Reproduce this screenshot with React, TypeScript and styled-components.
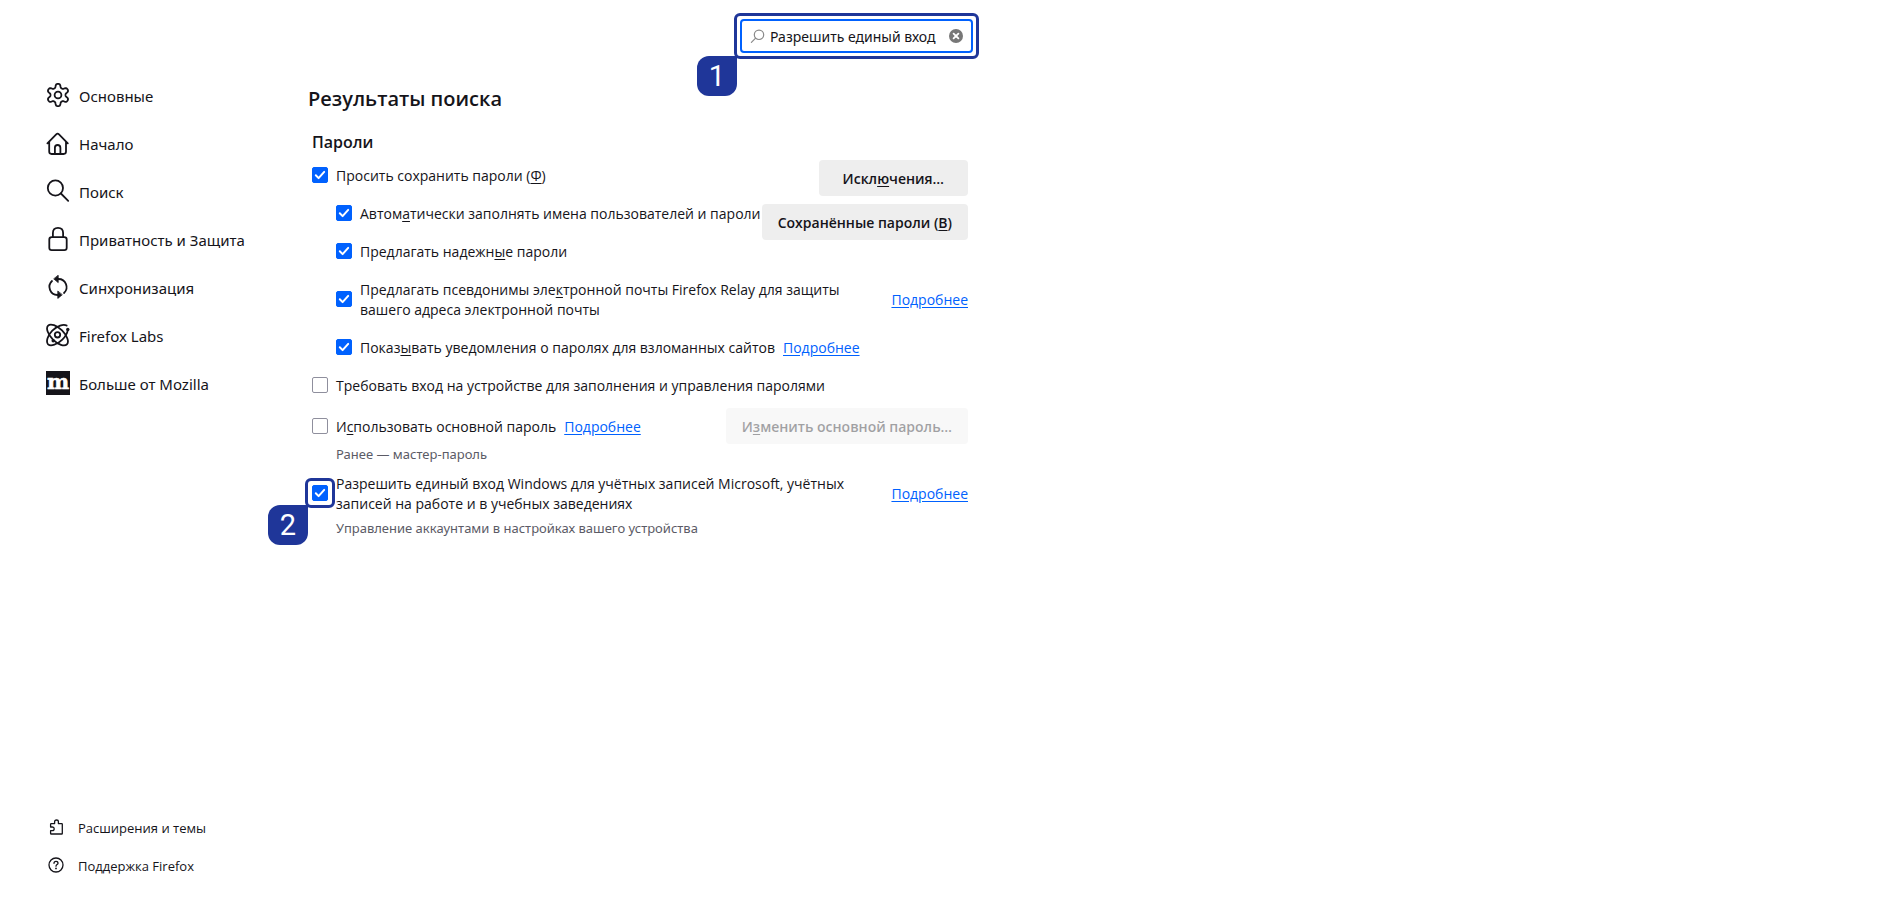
import React, { useId, useState } from 'react';
import styled, { createGlobalStyle, css } from 'styled-components';

const ink = '#15141a';
const accent = '#0061fe';
const marker = '#1f3699';

const GlobalStyle = createGlobalStyle`
  *, *::before, *::after { box-sizing: border-box; }
  body {
    margin: 0;
    background: #fff;
    color: ${ink};
    font: 14px/20px "Open Sans", "Noto Sans", sans-serif;
  }
  p, h1, h2, ul { margin: 0; padding: 0; }
  ul { list-style: none; }
`;

/* ---------- layout ---------- */

const Page = styled.div`
  display: flex;
  align-items: stretch;
  min-height: 100vh;
`;

const Sidebar = styled.nav`
  display: flex;
  flex-direction: column;
  justify-content: space-between;
  flex: 0 0 308px;
  padding: 71px 16px 36px 46px;
`;

const Main = styled.main`
  flex: 0 1 665px;
  padding-top: 19px;
`;

const Content = styled.div`
  padding: 32px 5px 32px 0;
`;

/* ---------- sidebar ---------- */

const CategoryLink = styled.a`
  display: flex;
  align-items: center;
  gap: 9px;
  height: 48px;
  color: inherit;
  font-family: "Noto Sans", sans-serif;
  font-size: 15px;
  text-decoration: none;
  white-space: nowrap;
`;

const FooterLink = styled(CategoryLink)`
  gap: 14px;
  height: 38px;
  padding-left: 2px;
  font-family: inherit;
  font-size: 13px;
`;

const LinkText = styled.span`
  padding-top: 2px;
`;

const Icon = styled.svg<{ $size?: number }>`
  display: block;
  flex: none;
  width: ${p => p.$size ?? 24}px;
  height: ${p => p.$size ?? 24}px;
  fill: none;
  stroke: ${ink};
  stroke-width: 1.8;
  stroke-linecap: round;
  stroke-linejoin: round;
`;

const LogoLetter = styled.text`
  fill: #fff;
  stroke: #fff;
  stroke-width: 0.5;
  font: bold 21px "DejaVu Serif", serif;
  text-anchor: middle;
`;

/* ---------- numbered markers ---------- */

const Highlight = styled.div<{ $gap: number }>`
  position: absolute;
  inset: -${p => p.$gap + 3}px;
  border: 3px solid ${marker};
  border-radius: 6px;
  pointer-events: none;
`;

const Step = styled.span`
  position: absolute;
  top: 100%;
  right: 100%;
  display: grid;
  place-items: center;
  width: 40px;
  height: 40px;
  border-radius: 12px 0 12px 12px;
  background: ${marker};
  color: #fff;
  font: 29px/40px Roboto, "Liberation Sans", sans-serif;
`;

/* ---------- search ---------- */

const Header = styled.header`
  display: flex;
  justify-content: flex-end;
`;

const SearchBox = styled.div`
  position: relative;
  display: flex;
  align-items: center;
  gap: 5px;
  width: 233px;
  height: 34px;
  padding: 0 8px;
  border: 2px solid ${accent};
  border-radius: 4px;
`;

const SearchInput = styled.input`
  flex: 1;
  min-width: 0;
  height: 28px;
  padding: 0;
  border: 0;
  outline: 0;
  background: transparent;
  color: inherit;
  font: 14px/20px "Noto Sans", sans-serif;
`;

const ClearButton = styled.button`
  padding: 0;
  border: 0;
  background: none;
  cursor: pointer;
`;

/* ---------- settings ---------- */

const Title = styled.h1`
  font-size: 20px;
  line-height: 28px;
  font-weight: 600;
`;

const Group = styled.section`
  padding: 18px 0 0 4px;
`;

const GroupTitle = styled.h2`
  font-size: 16px;
  line-height: 22px;
  font-weight: 600;
`;

const SplitRow = styled.div`
  display: flex;
  justify-content: space-between;
  align-items: flex-start;
  padding-top: 7px;
`;

const ButtonStack = styled.div`
  display: flex;
  flex-direction: column;
  align-items: flex-end;
  gap: 8px;
`;

const Stack = styled.div`
  display: flex;
  flex-direction: column;
  gap: 18px;
`;

const TopStack = styled(Stack)`
  padding-top: 6px;
`;

const LowerStack = styled(Stack)`
  padding-top: 18px;
`;

const Row = styled.div<{ $nested?: boolean; $spread?: boolean }>`
  display: flex;
  align-items: center;
  gap: 8px;
  ${p => p.$nested && css`padding-left: 24px;`}
  ${p => p.$spread && css`justify-content: space-between; gap: 24px;`}
`;

const PrimaryRow = styled(Row)`
  padding-top: 12px;
`;

const PrimaryLead = styled(Row)`
  padding-top: 2px;
`;

const SignOnRow = styled(Row)`
  padding-top: 11px;
`;

const CheckLabel = styled.label<{ $wrap?: boolean }>`
  display: flex;
  align-items: center;
  gap: 8px;
  white-space: ${p => (p.$wrap ? 'normal' : 'nowrap')};
`;

const CheckCell = styled.span`
  position: relative;
  display: grid;
  flex: none;
  width: 16px;
  height: 16px;
  margin-bottom: 2px;
  > * { grid-area: 1 / 1; }
`;

const CheckInput = styled.input`
  appearance: none;
  width: 16px;
  height: 16px;
  margin: 0;
  border: 1px solid #8f8f9d;
  border-radius: 2px;
  background: #fff;
  &:checked { border-color: ${accent}; background: ${accent}; }
`;

const Tick = styled(Icon)`
  stroke: #fff;
  stroke-width: 2;
  pointer-events: none;
`;

const Hint = styled.p`
  padding: 1px 0 0 24px;
  color: #5b5b66;
  font: 13px/18px "Noto Sans", sans-serif;
`;

const SignOnHint = styled(Hint)`
  padding-top: 5px;
`;

const LearnMore = styled.a`
  flex: none;
  color: ${accent};
  text-underline-offset: 2px;
`;

const PushButton = styled.button<{ $wide?: boolean }>`
  flex: none;
  height: 36px;
  padding: 1px ${p => (p.$wide ? 24 : 16)}px 0;
  border: 0;
  border-radius: 4px;
  background: #eeeeee;
  color: ${ink};
  font: inherit;
  font-weight: 600;
  white-space: nowrap;
  &:disabled { opacity: 0.4; }
`;

const Key = styled.u`
  text-underline-offset: 2px;
`;

/* ---------- icons ---------- */

const gearPath = (() => {
  const points: string[] = [];
  for (let i = 0; i < 120; i++) {
    const a = (i / 120) * Math.PI * 2;
    const r = 9.3 + 1.9 * Math.tanh(1.7 * Math.cos(6 * a));
    points.push(`${(12 + r * Math.sin(a)).toFixed(2)} ${(12 - r * Math.cos(a)).toFixed(2)}`);
  }
  return `M${points.join('L')}Z`;
})();

const GearIcon = () => (
  <Icon viewBox="0 0 24 24" aria-hidden><path d={gearPath} /><circle cx="12" cy="12" r="3.4" /></Icon>
);
const HomeIcon = () => (
  <Icon viewBox="0 0 24 24" aria-hidden>
    <path d="M1.4 12.4 10.2 3.3Q11.6 1.9 13 3.3L21.8 12.4M3.2 10.8V20.6Q3.2 23 5.6 23H17.6Q20 23 20 20.6V10.8M8.9 23V16.8Q8.9 14 11.6 14T14.4 16.8V23" />
  </Icon>
);
const FindIcon = () => (
  <Icon viewBox="0 0 24 24" aria-hidden><circle cx="9.4" cy="9" r="7.6" /><path d="M14.9 14.5 22.2 21.8" /></Icon>
);
const LockIcon = () => (
  <Icon viewBox="0 0 24 24" aria-hidden>
    <path d="M6.9 10.2V6Q6.9 .9 12 .9T17.1 6V10.2" /><rect x="3.3" y="10.2" width="17.4" height="12.9" rx="2.4" />
  </Icon>
);
const SyncIcon = () => (
  <Icon viewBox="0 0 24 24" aria-hidden>
    <path d="M12.5 4A8.1 8.1 0 0 1 18 18M11.5 20A8.1 8.1 0 0 1 6 6" />
    <path d="M12.2 .6V7.6L8 4.1ZM11.8 16.4V23.4L16 19.9Z" fill={ink} strokeWidth=".8" />
  </Icon>
);
const LabsIcon = () => (
  <Icon viewBox="0 0 24 24" aria-hidden>
    <ellipse cx="11.5" cy="12" rx="13.3" ry="6.4" transform="rotate(45 11.5 12)" />
    <path d="M20.6 2.6C17.6 .4 11 3 6.300 7.600 1.700 12.300 -.4 18.600 2.100 21.300 4.700 23.700 11.500 21.400 16.300 16.600 19.500 13.400 21.400 10.200 21.800 7" />
    <circle cx="11.5" cy="11.8" r="2.7" />
    <circle cx="21.8" cy="6.5" r="1.7" fill={ink} stroke="none" />
    <circle cx="7.2" cy="17.8" r="1.7" fill={ink} stroke="none" />
  </Icon>
);
const MozillaIcon = () => (
  <Icon viewBox="0 0 24 24" aria-hidden>
    <rect width="24" height="24" fill={ink} stroke="none" /><LogoLetter x="12" y="18">m</LogoLetter>
  </Icon>
);
const AddonIcon = () => (
  <Icon viewBox="0 0 16 16" $size={16} aria-hidden>
    <path strokeWidth="1.3" d="M2.6 8V5.2Q2.6 4.6 3.2 4.6H6.6V2.8Q6.6 1 8.5 1T10.4 2.8V4.6H13.7Q14.3 4.6 14.3 5.2V14.4Q14.3 15 13.7 15H3.2Q2.6 15 2.6 14.4V11.7H4.4Q6.2 11.7 6.2 9.85T4.4 8Z" />
  </Icon>
);
const HelpIcon = () => (
  <Icon viewBox="0 0 16 16" $size={16} aria-hidden>
    <circle cx="8" cy="8" r="7" strokeWidth="1.3" />
    <path strokeWidth="1.3" d="M6 6.3Q6 4.4 8 4.4T10 6.2C10 7.6 8 7.6 8 9.2" />
    <circle cx="8" cy="11.4" r=".9" fill={ink} stroke="none" />
  </Icon>
);

/* ---------- pieces ---------- */

interface CheckProps {
  initial?: boolean;
  wrap?: boolean;
  step?: number;
  children: React.ReactNode;
}

function Check({ initial = false, wrap, step, children }: CheckProps) {
  const id = useId();
  const [on, setOn] = useState(initial);
  return (
    <CheckLabel htmlFor={id} $wrap={wrap}>
      <CheckCell>
        <CheckInput id={id} type="checkbox" checked={on} onChange={e => setOn(e.target.checked)} />
        {on && <Tick viewBox="0 0 16 16" $size={16} aria-hidden><path d="M3.8 8.3 6.6 11.1 12.2 4.9" /></Tick>}
        {step && <Highlight $gap={4}><Step>{step}</Step></Highlight>}
      </CheckCell>
      <span>{children}</span>
    </CheckLabel>
  );
}

const More = () => <LearnMore href="#more">Подробнее</LearnMore>;

const categories = [
  { name: 'Основные', Glyph: GearIcon },
  { name: 'Начало', Glyph: HomeIcon },
  { name: 'Поиск', Glyph: FindIcon },
  { name: 'Приватность и Защита', Glyph: LockIcon },
  { name: 'Синхронизация', Glyph: SyncIcon },
  { name: 'Firefox Labs', Glyph: LabsIcon },
  { name: 'Больше от Mozilla', Glyph: MozillaIcon },
];

export default function App() {
  const [query, setQuery] = useState('Разрешить единый вход');
  return (
    <>
      <GlobalStyle />
      <Page>
        <Sidebar>
          <ul>
            {categories.map(({ name, Glyph }) => (
              <li key={name}><CategoryLink href="#category"><Glyph /><LinkText>{name}</LinkText></CategoryLink></li>
            ))}
          </ul>
          <ul>
            <li><FooterLink href="#addons"><AddonIcon /><LinkText>Расширения и темы</LinkText></FooterLink></li>
            <li><FooterLink href="#support"><HelpIcon /><LinkText>Поддержка Firefox</LinkText></FooterLink></li>
          </ul>
        </Sidebar>
        <Main>
          <Header>
            <SearchBox>
              <Icon viewBox="0 0 16 16" $size={15} aria-hidden>
                <g stroke="#8a8a8a" strokeWidth="1.3"><circle cx="9.6" cy="6.2" r="5" /><path d="M6 9.8 1.5 14.3" /></g>
              </Icon>
              <SearchInput aria-label="Поиск" value={query} onChange={e => setQuery(e.target.value)} />
              <ClearButton type="button" aria-label="Очистить" onClick={() => setQuery('')}>
                <Icon viewBox="0 0 14 14" $size={14} aria-hidden>
                  <circle cx="7" cy="7" r="7" fill="#777" stroke="none" />
                  <path d="M4.6 4.6 9.4 9.4M9.4 4.6 4.6 9.4" stroke="#fff" />
                </Icon>
              </ClearButton>
              <Highlight $gap={5}><Step>1</Step></Highlight>
            </SearchBox>
          </Header>
          <Content>
            <Title>Результаты поиска</Title>
            <Group>
              <GroupTitle>Пароли</GroupTitle>
              <SplitRow>
                <TopStack>
                  <Row><Check initial>Просить сохранить пароли (<Key>Ф</Key>)</Check></Row>
                  <Row $nested><Check initial>Автом<Key>а</Key>тически заполнять имена пользователей и пароли</Check></Row>
                  <Row $nested><Check initial>Предлагать надежн<Key>ы</Key>е пароли</Check></Row>
                </TopStack>
                <ButtonStack>
                  <PushButton type="button" $wide>Искл<Key>ю</Key>чения…</PushButton>
                  <PushButton type="button">Сохранённые пароли (<Key>В</Key>)</PushButton>
                </ButtonStack>
              </SplitRow>
              <LowerStack>
                <Row $nested $spread>
                  <Check initial wrap>Предлагать псевдонимы эле<Key>к</Key>тронной почты Firefox Relay для защиты вашего адреса электронной почты</Check>
                  <More />
                </Row>
                <Row $nested><Check initial>Показ<Key>ы</Key>вать уведомления о паролях для взломанных сайтов</Check><More /></Row>
                <Row><Check>Требовать вход на устройстве для заполнения и управления паролями</Check></Row>
              </LowerStack>
              <PrimaryRow $spread>
                <PrimaryLead><Check>И<Key>с</Key>пользовать основной пароль</Check><More /></PrimaryLead>
                <PushButton type="button" disabled>И<Key>з</Key>менить основной пароль…</PushButton>
              </PrimaryRow>
              <Hint>Ранее — мастер-пароль</Hint>
              <SignOnRow $spread>
                <Check initial wrap step={2}>Разрешить единый вход Windows для учётных записей Microsoft, учётных записей на работе и в учебных заведениях</Check>
                <More />
              </SignOnRow>
              <SignOnHint>Управление аккаунтами в настройках вашего устройства</SignOnHint>
            </Group>
          </Content>
        </Main>
      </Page>
    </>
  );
}
